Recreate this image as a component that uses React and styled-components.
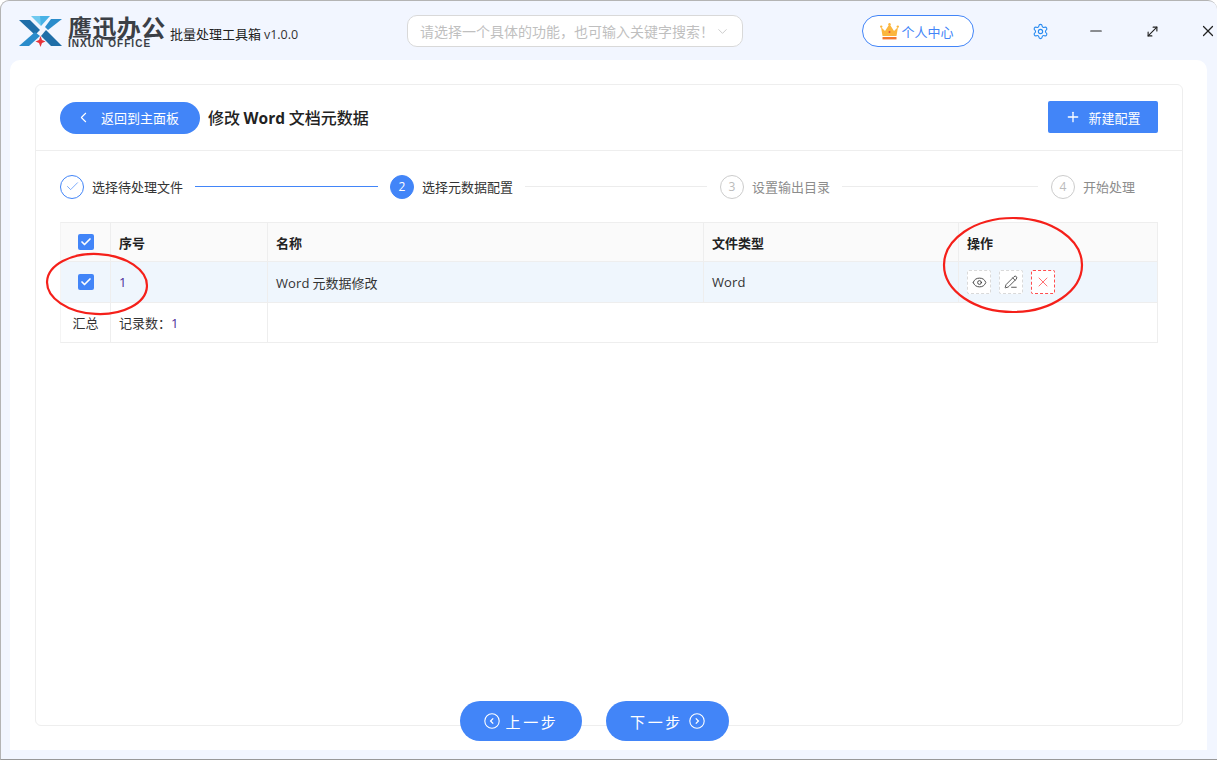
import React from 'react';
import styled, { createGlobalStyle } from 'styled-components';
import { Check, ChevronLeft, ChevronRight, ChevronDown, Plus, Eye, Minus, X, Settings, MoveDiagonal, PencilLine } from 'lucide-react';

const Global = createGlobalStyle`
  html, body { margin: 0; padding: 0; background: #fff; }
  body { font-family: "Noto Sans CJK SC", "Noto Sans", sans-serif; }
  * { box-sizing: border-box; }
`;
const Win = styled.div`
  position: relative; width: 1217px; height: 760px; background: #f2f6ff;
  border: 1px solid #b4b4b4; border-bottom-color: #999; border-radius: 9px 9px 0 0;
  border-right: 0; display: flex; flex-direction: column; overflow: hidden;
`;
const Header = styled.header`
  height: 59px; flex: none; display: flex; align-items: center; padding-left: 17px;
`;
const LogoBox = styled.div`display: flex; align-items: center; width: 152px; flex: none;`;
const LogoText = styled.div`
  display: flex; flex-direction: column; margin-left: 5px; color: #3b3f46; margin-top: 1px;
`;
const LogoCn = styled.div`font-size: 24px; font-weight: 700; line-height: 25px; letter-spacing: .4px; white-space: nowrap;`;
const LogoEn = styled.div`font: 700 10px/10px "Liberation Sans", sans-serif; letter-spacing: 1.05px; white-space: nowrap;`;
const AppName = styled.div`
  font-size: 13px; color: #222; width: 237px; flex: none; padding-top: 6px; margin-left: 0; white-space: nowrap;
  span { font-family: "Open Sans", sans-serif; font-size: 12.5px; color: #333; }
`;
const Search = styled.div`
  width: 336px; height: 32px; flex: none; background: #fff; border: 1px solid #d9d9d9; border-radius: 10px;
  display: flex; align-items: center; justify-content: space-between; padding: 0 12px; font-size: 14px; color: #bfbfbf;
  margin-top: 1px; white-space: nowrap;
`;
const Vip = styled.div`
  margin-left: 119px; width: 112px; height: 32px; flex: none; border: 1px solid #4285f8; border-radius: 16px; background: #fff;
  display: flex; align-items: center; justify-content: center; gap: 2px; font-size: 13px; color: #4285f8; margin-top: 1px; padding-right: 2px;
`;
const WinIcons = styled.div`
  display: flex; align-items: center; margin-left: 38px; margin-top: 1px;
  svg { flex: none; }
`;
const IconSlot = styled.div`width: 56px; display: flex; justify-content: center; margin-right: ${p => p.$mr || 0}px;`;
const Main = styled.main`
  flex: 1; margin: 0 10px 9px 9px; background: #fff; border-radius: 10px 10px 0 0; padding: 24px 24px 24px 25px;
  display: flex; flex-direction: column; min-height: 0;
`;
const Card = styled.section`
  flex: 1; border: 1px solid #eeeeee; border-radius: 6px; display: flex; flex-direction: column; min-height: 0;
`;
const CardHead = styled.div`
  height: 66px; flex: none; border-bottom: 1px solid #eee; padding: 16px 24px 0; display: flex; align-items: flex-start; justify-content: space-between;
`;
const HeadLeft = styled.div`display: flex; align-items: center; gap: 8px;`;
const BackBtn = styled.button`
  width: 140px; height: 32px; border: 0; border-radius: 16px; background: #4285f8; color: #fff; font: inherit; font-size: 13px;
  display: flex; align-items: center; padding: 0 0 0 15px; gap: 9px;
`;
const Title = styled.h1`
  margin: 0; font-size: 16px; font-weight: 500; color: #222; line-height: 32px;
  span { font-family: "Open Sans", sans-serif; font-weight: 700; font-size: 15.5px; }
`;
const NewBtn = styled.button`
  width: 110px; height: 32px; border: 0; border-radius: 2px; background: #4285f8; color: #fff; font: inherit; font-size: 13px;
  display: flex; align-items: center; justify-content: center; gap: 7px;
`;
const Steps = styled.div`
  height: 71px; flex: none; padding: 0 24px; display: flex; align-items: center;
`;
const Circle = styled.div`
  width: 24px; height: 24px; flex: none; border-radius: 50%; display: flex; align-items: center; justify-content: center;
  font: 12px "Open Sans", sans-serif;
  background: ${p => p.$state === 'cur' ? '#4285f8' : '#fff'};
  color: ${p => p.$state === 'cur' ? '#fff' : p.$state === 'done' ? '#4285f8' : '#bbb'};
  border: 1px solid ${p => p.$state === 'cur' ? '#4285f8' : p.$state === 'done' ? '#4285f8' : '#ccc'};
`;
const StepLabel = styled.div`
  margin-left: 8px; font-size: 13px; color: ${p => p.$muted ? '#8c8c8c' : '#333'}; white-space: nowrap; flex: none;
`;
const StepLine = styled.div`
  flex: none; width: ${p => p.$w}px; height: 1px; margin: 0 ${p => p.$mr ?? 12}px 0 12px; background: ${p => p.$on ? '#4285f8' : '#ececec'};
`;
const Table = styled.div`
  margin: 0 24px; border: 1px solid #eee; border-width: 1px 1px 1px 0; display: flex; flex-direction: column; font-size: 13px; color: #333;
  border-left: 1px solid #f4f4f4;
`;
const Row = styled.div`
  display: grid; grid-template-columns: 50px 157px 436px 255px 1fr; height: ${p => p.$h}px;
  background: ${p => p.$bg || '#fff'}; border-bottom: ${p => p.$last ? 0 : '1px solid #eee'};
`;
const Cell = styled.div`
  display: flex; align-items: center; padding: 0 8px; border-right: ${p => p.$nb ? 0 : '1px solid #eee'};
  justify-content: ${p => p.$center ? 'center' : 'flex-start'}; white-space: nowrap;
  font-weight: ${p => p.$head ? 700 : 400}; color: ${p => p.$head ? '#222' : '#333'};
  gap: 8px;
`;
const Latin = styled.span`font-family: "Open Sans", sans-serif; font-size: 13px; letter-spacing: .1px; color: ${p => p.$c || 'inherit'};`;
const Box = styled.div`
  width: 16px; height: 16px; border-radius: 2px; background: #4285f8; display: flex; align-items: center; justify-content: center;
`;
const ActBtn = styled.div`
  width: 24px; height: 24px; border-radius: 2px; border: 1px dashed ${p => p.$red ? '#ff4d4f' : '#d9d9d9'};
  background: #fff; display: flex; align-items: center; justify-content: center; color: ${p => p.$red ? '#ff4d4f' : '#333'};
`;
const Foot = styled.div`
  flex: none; margin-top: -25px; padding-left: 425px; display: flex; gap: 24px; position: relative; margin-bottom: -15px;
`;
const NavBtn = styled.button`
  width: ${p => p.$w}px; height: 40px; border: 0; border-radius: 20px; background: #4285f8; color: #fff; font: inherit; font-size: 15px;
  display: flex; align-items: center; justify-content: center; gap: 6px; letter-spacing: 2.6px; padding: 0;
`;
const Scribble = styled.svg`position: absolute; pointer-events: none; overflow: visible;`;
const Spacer = styled.div`flex: 1;`;

const LogoMark = () => (
  <svg width="45" height="32" viewBox="0 0 45 32">
    <path d="M0 3 L13 3 L22.5 13.5 L32 3 L45 3 L28 18 L44 31 L34 31 L22.5 21 L11 31 L1 31 L17 18 Z" fill="#2a7fb8" opacity="0" />
    <path d="M1 5 L12 5 L22 15 L17 20 Z" fill="#1f6ea8" />
    <path d="M17 17 L22 21 L11 31 L1 31 Z" fill="#2a8ccb" />
    <path d="M28 15 L44 31 L33 31 L23 21 Z" fill="#1f6ea8" />
    <path d="M12 1 L22.5 11 L33 1 L24 1 L22.5 3 L21 1 Z" fill="#7fd0f2" opacity="0" />
    <path d="M13 1 L24 1 L23 11 Z" fill="#6fc9ef" />
    <path d="M32 1 L22 1 L23 11 Z" fill="#48b2e6" />
    <path d="M44 4 L33 4 L27 12 L30 15 Z" fill="#2a8ccb" />
    <path d="M22.5 21 L24 25 L27.5 26.5 L24 28 L22.5 32 L21 28 L17.5 26.5 L21 25 Z" fill="#e8343a" />
  </svg>
);
const Crown = () => (
  <svg width="19" height="17" viewBox="0 0 19 17">
    <path d="M1 4 L5 8 L9.5 1 L14 8 L18 4 L16.5 13 L2.5 13 Z" fill="#fbb63e" />
    <circle cx="1.2" cy="3.6" r="1.2" fill="#fbb63e" /><circle cx="9.5" cy="1.2" r="1.2" fill="#fbb63e" /><circle cx="17.8" cy="3.6" r="1.2" fill="#fbb63e" />
    <rect x="2.5" y="14" width="14" height="2.4" fill="#f4772e" />
    <circle cx="9.5" cy="9" r="1" fill="#e8503a" />
  </svg>
);
const CircleArrow = ({ dir }) => (
  <svg width="16" height="16" viewBox="0 0 16 16" fill="none" stroke="#fff" strokeWidth="1.1">
    <circle cx="8" cy="8" r="7.2" />
    <path d={dir === 'l' ? 'M9.2 5.4 L6.6 8 L9.2 10.6' : 'M6.8 5.4 L9.4 8 L6.8 10.6'} strokeWidth="1.3" />
  </svg>
);
const Tick = () => <Check size={12} color="#fff" strokeWidth={3.4} />;

export default function App() {
  return (
    <Win>
      <Global />
      <Header>
        <LogoBox>
          <LogoMark />
          <LogoText>
            <LogoCn>鹰迅办公</LogoCn>
            <LogoEn>INXUN OFFICE</LogoEn>
          </LogoText>
        </LogoBox>
        <AppName>批量处理工具箱 <span>v1.0.0</span></AppName>
        <Search>
          <span>请选择一个具体的功能，也可输入关键字搜索！</span>
          <ChevronDown size={15} strokeWidth={1.2} color="#bbb" />
        </Search>
        <Vip><Crown />个人中心</Vip>
        <WinIcons>
          <IconSlot><Settings size={17} color="#2b8cf0" strokeWidth={1.6} /></IconSlot>
          <IconSlot><Minus size={18} color="#222" strokeWidth={1.6} /></IconSlot>
          <IconSlot><MoveDiagonal size={15} color="#222" strokeWidth={1.8} /></IconSlot>
          <IconSlot><X size={18} color="#222" strokeWidth={1.6} /></IconSlot>
        </WinIcons>
      </Header>
      <Main>
        <Card>
          <CardHead>
            <HeadLeft>
              <BackBtn><ChevronLeft size={17} strokeWidth={1.5} />返回到主面板</BackBtn>
              <Title>修改 <span>Word</span> 文档元数据</Title>
            </HeadLeft>
            <NewBtn><Plus size={16} strokeWidth={2} />新建配置</NewBtn>
          </CardHead>
          <Steps>
            <Circle $state="done"><Check size={15} strokeWidth={1.1} /></Circle>
            <StepLabel>选择待处理文件</StepLabel>
            <StepLine $on $w={183} />
            <Circle $state="cur">2</Circle>
            <StepLabel>选择元数据配置</StepLabel>
            <StepLine $w={182} $mr={13} />
            <Circle>3</Circle>
            <StepLabel $muted>设置输出目录</StepLabel>
            <StepLine $w={196} $mr={13} />
            <Circle>4</Circle>
            <StepLabel $muted>开始处理</StepLabel>
          </Steps>
          <Table>
            <Row $h={39} $bg="#fafafa">
              <Cell $center><Box><Tick /></Box></Cell>
              <Cell $head>序号</Cell>
              <Cell $head>名称</Cell>
              <Cell $head>文件类型</Cell>
              <Cell $head $nb>操作</Cell>
            </Row>
            <Row $h={41} $bg="#eff6fd">
              <Cell $center><Box><Tick /></Box></Cell>
              <Cell><Latin $c="#4b2a9a">1</Latin></Cell>
              <Cell><span><Latin>Word</Latin> 元数据修改</span></Cell>
              <Cell><Latin>Word</Latin></Cell>
              <Cell $nb>
                <ActBtn><Eye size={15} strokeWidth={1.4} /></ActBtn>
                <ActBtn><PencilLine size={14} strokeWidth={1.4} /></ActBtn>
                <ActBtn $red><X size={16} strokeWidth={1.2} /></ActBtn>
              </Cell>
            </Row>
            <Row $h={39} $last>
              <Cell $center>汇总</Cell>
              <Cell><span>记录数：<Latin $c="#4b2a9a">1</Latin></span></Cell>
              <Cell $nb /><Cell $nb /><Cell $nb />
            </Row>
          </Table>
          <Spacer />
        </Card>
        <Foot>
          <NavBtn $w={122}><CircleArrow dir="l" />上一步</NavBtn>
          <NavBtn $w={123}>下一步<CircleArrow dir="r" /></NavBtn>
        </Foot>
      </Main>
      <Scribble style={{ left: 44, top: 250 }} width="104" height="66" viewBox="0 0 104 66">
        <ellipse cx="52" cy="33" rx="50" ry="30" fill="none" stroke="#f5201a" strokeWidth="2.2" transform="rotate(3 52 33)" />
      </Scribble>
      <Scribble style={{ left: 941, top: 215 }} width="142" height="98" viewBox="0 0 142 98">
        <ellipse cx="71" cy="49" rx="69" ry="47" fill="none" stroke="#f5201a" strokeWidth="2.2" />
      </Scribble>
    </Win>
  );
}
